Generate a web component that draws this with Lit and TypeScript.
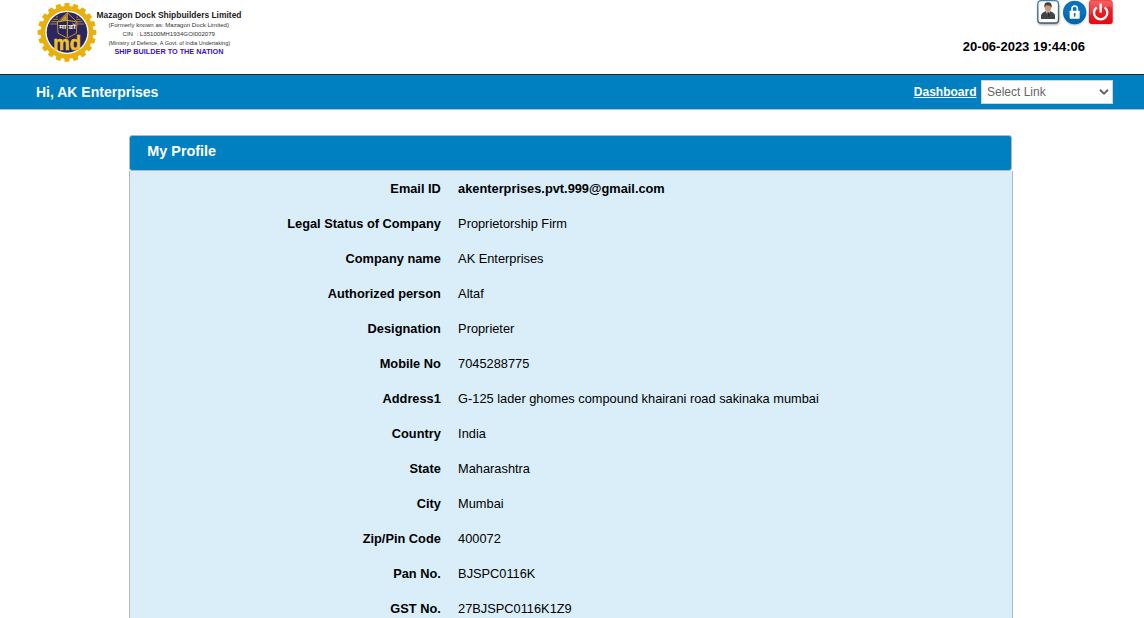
import { LitElement, html, css, svg } from "lit";
import { customElement, property } from "lit/decorators.js";

const ROWS: Array<[string, string]> = [
  ["Email ID", "akenterprises.pvt.999@gmail.com"],
  ["Legal Status of Company", "Proprietorship Firm"],
  ["Company name", "AK Enterprises"],
  ["Authorized person", "Altaf"],
  ["Designation", "Proprieter"],
  ["Mobile No", "7045288775"],
  ["Address1", "G-125 lader ghomes compound khairani road sakinaka mumbai"],
  ["Country", "India"],
  ["State", "Maharashtra"],
  ["City", "Mumbai"],
  ["Zip/Pin Code", "400072"],
  ["Pan No.", "BJSPC0116K"],
  ["GST No.", "27BJSPC0116K1Z9"],
];

@customElement("company-logo")
class CompanyLogo extends LitElement {
  static styles = css`
    :host { display: block; }
    svg { display: block; }
    text { font-family: "Liberation Sans", Arial, sans-serif; }
    .name { font-weight: bold; font-size: 8.5px; fill: #222; }
    .small { font-size: 6.2px; fill: #333; }
    .motto { font-weight: bold; font-size: 7px; fill: #3d10d8; }
    .md { font-weight: bold; font-size: 58px; fill: #f0c22c; stroke: #f0c22c; stroke-width: 1.5; }
    .hindi { font-family: "Noto Sans", sans-serif; font-weight: bold; font-size: 18px; fill: #f4e9c8; }
  `;
  render() {
    const teeth = Array.from({ length: 20 }, (_, i) =>
      svg`<path d="M-9 -74 L-7 -88 H7 L9 -74Z" transform=${`rotate(${i * 18})`}></path>`);
    const rays = [51, 58, 65, 72].map((y) =>
      svg`<path d=${`M${111 - Math.sqrt(3200 - (97 - y) ** 2)} ${y}H84M139 ${y}H${111 + Math.sqrt(3200 - (97 - y) ** 2)}`}></path>`);
    return html`
      <svg width="250" height="66" viewBox="30 0 250 66">
        <g transform="translate(30 0) scale(.33333)">
          <g transform="translate(111 97)" fill="#e8b00c">
            ${teeth}
            <circle r="79"></circle>
            <circle r="65" fill="#fff"></circle>
            <circle r="61" fill="#2b2560"></circle>
          </g>
          <g stroke="#c49a31" stroke-width="2.6">${rays}</g>
          <path d="M82 66L112 38L141 66L139 100L112 114L84 100Z" fill="#29235c" stroke="#d6a62b" stroke-width="2.5"></path>
          <path d="M90 62L110 42V62Z" fill="#c99b30"></path>
          <path d="M112 39V112M82 66L112 61L141 66" fill="none" stroke="#d6a62b" stroke-width="3"></path>
          <text class="hindi" x="87" y="87" textLength="22" lengthAdjust="spacingAndGlyphs">मा</text>
          <text class="hindi" x="115" y="87" textLength="22" lengthAdjust="spacingAndGlyphs">डॉ</text>
          <text class="md" x="70" y="149" textLength="83" lengthAdjust="spacingAndGlyphs">md</text>
        </g>
        <text class="name" x="96.5" y="17.8" textLength="145" lengthAdjust="spacingAndGlyphs">Mazagon Dock Shipbuilders Limited</text>
        <text class="small" x="108.5" y="27" textLength="120.5" lengthAdjust="spacingAndGlyphs">(Formerly known as: Mazagon Dock Limited)</text>
        <text class="small" x="122.5" y="35.6" textLength="92.5" lengthAdjust="spacingAndGlyphs" xml:space="preserve">CIN  : L35100MH1934GOI002079</text>
        <text class="small" x="108.5" y="44.6" textLength="121.5" lengthAdjust="spacingAndGlyphs">(Ministry of Defence, A Govt. of India Undertaking)</text>
        <text class="motto" x="114.5" y="53.6" textLength="109" lengthAdjust="spacingAndGlyphs">SHIP BUILDER TO THE NATION</text>
      </svg>`;
  }
}

@customElement("header-icons")
class HeaderIcons extends LitElement {
  static styles = css`:host, svg { display: block; }`;
  render() {
    return html`
      <svg width="90" height="30" viewBox="0 0 270 90">
        <defs>
          <linearGradient id="red" x1="0" y1="0" x2="0" y2="1">
            <stop offset="0" stop-color="#ef4444"></stop>
            <stop offset=".45" stop-color="#f01c20"></stop>
            <stop offset="1" stop-color="#e60810"></stop>
          </linearGradient>
          <linearGradient id="edge" x1="0" y1="0" x2="0" y2="1">
            <stop offset="0" stop-color="#3f82a6"></stop>
            <stop offset="1" stop-color="#45596a"></stop>
          </linearGradient>
          <filter id="soft" x="-20%" y="-20%" width="140%" height="150%"><feGaussianBlur stdDeviation="3"></feGaussianBlur></filter>
        </defs>
        <rect x="23" y="8" width="65" height="66" rx="11" fill="#777" opacity=".7" filter="url(#soft)"></rect>
        <rect x="23.5" y="2" width="62" height="67" rx="10" fill="#fff" stroke="url(#edge)" stroke-width="4"></rect>
        <path d="M33 57V46Q35 38 47 34H61Q73 38 75 46V57Z" fill="#414449"></path>
        <path d="M48 34L54 49L60 34L55 31Z" fill="#e8e8e8"></path>
        <path d="M52 37H57L58 46L55 52L52 46Z" fill="#25282c"></path>
        <ellipse cx="54" cy="23" rx="9.5" ry="12.5" fill="#c79d78"></ellipse>
        <path d="M43 23Q41 7 54 7Q67 7 65 23Q61 15 48 16Z" fill="#4b3d34"></path>
        <circle cx="134" cy="42" r="33" fill="#888" opacity=".7" filter="url(#soft)"></circle>
        <circle cx="134" cy="37" r="35" fill="#0872bd"></circle>
        <path d="M101 40A33 33 0 0 0 167 40Q134 60 101 40Z" fill="#0367ad"></path>
        <path d="M126 33V26Q126 18 134 18Q142 18 142 26V33" fill="none" stroke="#fff" stroke-width="5"></path>
        <rect x="119" y="32" width="30" height="24" rx="2" fill="#fff"></rect>
        <path d="M134 39A3.5 3.5 0 0 1 136 45V50H132V45A3.5 3.5 0 0 1 134 39" fill="#0872bd"></path>
        <rect x="178" y="8" width="70" height="65" rx="8" fill="#777" opacity=".6" filter="url(#soft)"></rect>
        <rect x="177" y="0" width="71" height="72" rx="8" fill="url(#red)"></rect>
        <path d="M179 27V8Q179 2 186 2H239Q246 2 246 8V21Q213 16 179 45Z" fill="#fff" opacity=".16"></path>
        <path d="M200 22A20 20 0 1 0 224 22" fill="none" stroke="#fff" stroke-width="7"></path>
        <path d="M212 11V38" stroke="#fff" stroke-width="7"></path>
      </svg>`;
  }
}

@customElement("profile-panel")
class ProfilePanel extends LitElement {
  @property({ attribute: false }) rows: Array<[string, string]> = [];
  static styles = css`
    :host { display: block; width: 884px; }
    .title { box-sizing: border-box; width: 883px; height: 36px; padding: 0 0 4px 17.3px; display: flex; align-items: center;
      background: #0080c0; border: 1px solid #b5b9bc; border-radius: 3px; color: #fff; font-size: 14.4px; font-weight: bold; }
    .body { box-sizing: border-box; background: #d9eef9; border: solid #b5b9bc; border-width: 0 1px; padding-bottom: 40px; font-size: 12.8px; }
    .row { display: grid; grid-template-columns: 310.85px 1fr; column-gap: 17.25px; height: 35px; line-height: 35px; }
    .label { text-align: right; font-weight: bold; }
    .row:first-child .value { font-weight: bold; }
  `;
  render() {
    return html`
      <div class="title">My Profile</div>
      <div class="body">
        ${this.rows.map(([label, value]) => html`<div class="row"><div class="label">${label}</div><div class="value">${value}</div></div>`)}
      </div>`;
  }
}

@customElement("app-root")
class AppRoot extends LitElement {
  static styles = css`
    :host { display: block; height: 618px; overflow: hidden; background: #fff; color: #000;
      font: 13px "Liberation Sans", Arial, sans-serif; }
    header { height: 74px; display: flex; justify-content: space-between; padding: 0 24px 0 30px; }
    .tools { width: 90px; display: flex; flex-direction: column; align-items: flex-end; }
    .time { font-weight: bold; white-space: nowrap; line-height: 15px; margin: 9px 35px 0 0; }
    nav { box-sizing: border-box; height: 36px; background: #0080c0; border-top: 1px solid #222; border-bottom: 1px solid #b5b9bc;
      display: flex; align-items: center; justify-content: space-between; padding: 0 31px 0 36px; color: #fff; }
    .hello { font-size: 14px; font-weight: bold; }
    .links { display: flex; align-items: center; gap: 4.5px; }
    a { color: #fff; font-size: 12px; font-weight: bold; text-decoration: underline; }
    .select { box-sizing: border-box; width: 132px; height: 24px; background: #fff; color: #666; border: 1px solid #d3d3d3; display: flex; align-items: center;
      justify-content: space-between; padding: 0 3px 0 5px; font-size: 12px; }
    .select svg { display: block; }
    main { padding: 25px 0 0 129px; }
  `;
  render() {
    return html`
      <header>
        <company-logo></company-logo>
        <div class="tools">
          <header-icons></header-icons>
          <div class="time">20-06-2023 19:44:06</div>
        </div>
      </header>
      <nav>
        <div class="hello">Hi, AK Enterprises</div>
        <div class="links">
          <a href="#">Dashboard</a>
          <div class="select" role="combobox" aria-expanded="false">Select Link
            <svg width="10" height="8" viewBox="0 0 10 8"><path d="M1 1.7L5 5.7L9 1.7" fill="none" stroke="#666" stroke-width="2"></path></svg>
          </div>
        </div>
      </nav>
      <main><profile-panel .rows=${ROWS}></profile-panel></main>`;
  }
}
